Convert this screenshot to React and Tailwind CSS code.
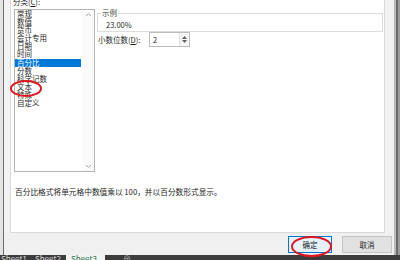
import React from "react";

const categories = ["常规", "数值", "货币", "会计专用", "日期", "时间", "百分比", "分数", "科学记数", "文本", "特殊", "自定义"];

const Chevron = ({ up }) => (
    <svg width="7" height="5" viewBox="0 0 7 5">
        <path d={up ? "M1 4 L3.5 1.5 L6 4" : "M1 1 L3.5 3.5 L6 1"} fill="none" stroke="#a6a6a6" strokeWidth="1" />
    </svg>
);

const App = () => {
    return (
        <div className="w-[400px] h-[260px] relative overflow-hidden flex flex-col bg-white text-[#1e1e1e] font-['Noto_Sans_CJK_SC','Noto_Sans',sans-serif]">
            <div className="flex h-[255px]">
                {/* excel behind the dialog */}
                <div className="w-[4px] bg-[#e4e4e4] border-r border-[#6b6b6b]" />

                <div className="w-[390px] flex flex-col bg-[#f2f2f2]">
                    <div className="h-[233px] flex pl-[6px] pr-[9px]">
                        <div className="flex-1 flex flex-col bg-white border-x border-b border-[#d9d9d9] pl-[3px]">
                            <div className="flex">
                                {/* 分类 */}
                                <div className="w-[81px] flex flex-col">
                                    <div className="-mt-[3px] -ml-[1px] h-[10px] leading-[10px] text-[7.5px]">分类(<span className="underline">C</span>):</div>
                                    <div className="mt-[2px] h-[163px] flex border border-[#b4b4b4]">
                                        <div className="flex-1 flex flex-col pt-[0px]">
                                            {categories.map((c) => (
                                                <div
                                                    key={c}
                                                    className={
                                                        c === "百分比"
                                                            ? "h-[8.1px] leading-[8.1px] text-[7.5px] pl-[2px] bg-[#0078d7] text-white mr-[1px]"
                                                            : "h-[8.1px] leading-[8.1px] text-[7.5px] pl-[2px]"
                                                    }
                                                >
                                                    {c}
                                                </div>
                                            ))}
                                        </div>
                                        <div className="w-[12px] flex flex-col justify-between items-center py-[2px] bg-[#fafafa]">
                                            <Chevron up />
                                            <Chevron />
                                        </div>
                                    </div>
                                </div>

                                {/* 示例 + 小数位数 */}
                                <div className="flex-1 ml-[2px] pt-[9px] pr-[1px] flex flex-col">
                                    <fieldset className="border border-[#dcdcdc] px-[3px] pb-[2px]">
                                        <legend className="px-[1px] text-[7.5px] leading-[8px] text-[#444]">示例</legend>
                                        <div className="pl-[5px] pt-[4px] text-[7.5px] leading-[8px]">23.00%</div>
                                    </fieldset>
                                    <div className="h-[15px] flex items-center ml-[1px]">
                                        <div className="w-[51px] text-[7.5px] leading-[10px]">小数位数(<span className="underline">D</span>):</div>
                                        <div className="w-[41px] h-[15px] flex border border-[#bdbdbd] bg-white">
                                            <div className="flex-1 pl-[3px] text-[7.5px] leading-[13px]">2</div>
                                            <div className="w-[10px] flex flex-col items-center justify-center gap-[1px] bg-[#f4f4f4] border-l border-[#e0e0e0]">
                                                <svg width="5" height="3" viewBox="0 0 5 3"><path d="M0 3 L2.5 0 L5 3 Z" fill="#606060" /></svg>
                                                <svg width="5" height="3" viewBox="0 0 5 3"><path d="M0 0 L2.5 3 L5 0 Z" fill="#606060" /></svg>
                                            </div>
                                        </div>
                                    </div>
                                </div>
                            </div>

                            <div className="mt-[15px] ml-[1px] text-[7.7px] leading-[10px]">百分比格式将单元格中数值乘以 100，并以百分数形式显示。</div>
                        </div>
                    </div>

                    {/* buttons */}
                    <div className="h-[22px] flex items-center justify-end gap-[10px] pr-[2px] bg-[#f0f0f0]">
                        <button className="w-[44px] h-[17px] border border-[#0078d7] bg-[#e5f1fb] text-[7.5px] leading-[15px] text-[#1e1e1e]">确定</button>
                        <button className="w-[50px] h-[17px] border border-[#c4c4c4] bg-[#e1e1e1] text-[7.5px] leading-[15px] text-[#1e1e1e]">取消</button>
                    </div>
                </div>

                <div className="w-[6px] flex">
                    <div className="w-[2px] bg-[#b9b9b9]" />
                    <div className="w-[2px] bg-[#6a6a6a]" />
                    <div className="w-[2px] bg-[#9c9c9c]" />
                </div>
            </div>

            {/* sheet tabs */}
            <div className="h-[5px] flex bg-[#3c3c3c] overflow-hidden text-[8px] leading-[8px] text-[#d8d8d8]">
                <div className="w-[24px] pl-[1px]">Sheet1</div>
                <div className="w-[8px]" />
                <div className="w-[30px] pl-[3px]">Sheet2</div>
                <div className="w-[4px]" />
                <div className="w-[39px] bg-[#f3f3f3] text-[#217346] pl-[5px]">Sheet3</div>
                <div className="w-[18px]" />
                <div className="text-[#bdbdbd]">⊕</div>
            </div>

            {/* red annotation circles */}
            <div className="absolute left-[10px] top-[80px] w-[32px] h-[17px] rounded-[50%] border-[2.5px] border-[#e0161e]" />
            <div className="absolute left-[291px] top-[236px] w-[41px] h-[21px] rounded-[50%] border-[2.5px] border-[#e0161e]" />
        </div>
    );
};

export default App;
